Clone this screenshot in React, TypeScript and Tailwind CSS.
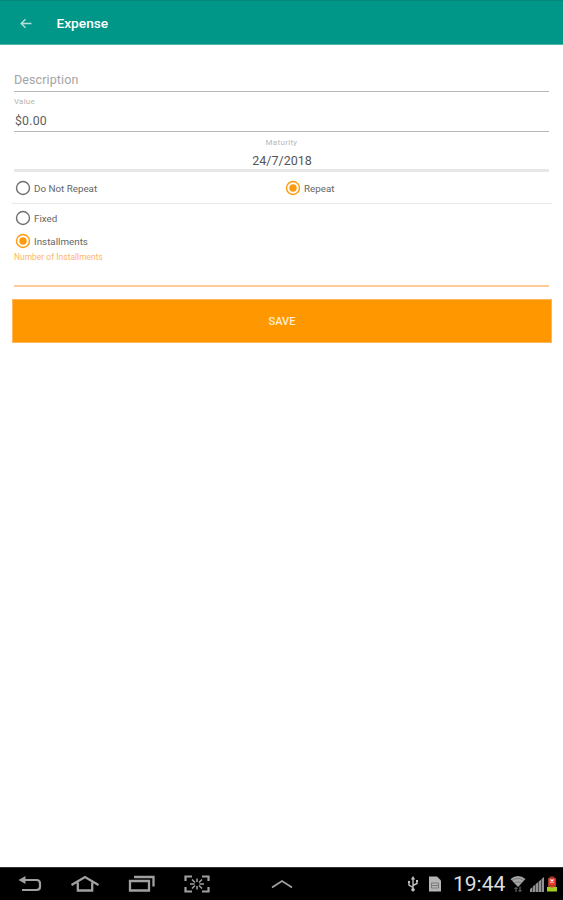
import clsx from "clsx";

type RadioProps = {
  label: string;
  checked?: boolean;
  className?: string;
};

function Radio({ label, checked, className }: RadioProps) {
  return (
    <label className={clsx("flex items-center gap-[3px]", className)}>
      <svg
        viewBox="0 0 16 16"
        className={clsx("size-4 shrink-0", checked ? "text-[#ff9a0c]" : "text-[#707070]")}>
        <circle cx="8" cy="8" r="6.5" fill="none" stroke="currentColor" strokeWidth="1.4" />
        {checked && <circle cx="8" cy="8" r="3.7" fill="currentColor" />}
      </svg>
      <span className="pt-px text-[9.8px] leading-none whitespace-nowrap text-[#666]">{label}</span>
    </label>
  );
}

function AppBar() {
  return (
    <header className="flex h-[45px] shrink-0 items-center border-t border-b border-t-[#07877a] border-b-[#4db5aa] bg-[#009688] pt-0.5 pl-5 text-white">
      <svg viewBox="0 0 12 12" className="size-3" fill="none" stroke="#b5e0dc" strokeWidth="1.4">
        <path d="M11.5 5.5H1.2M5.5 1.2 1.2 5.5 5.5 9.8" />
      </svg>
      <h1 className="ml-[24.5px] text-[13.7px] leading-none font-medium">Expense</h1>
    </header>
  );
}

function NavBar() {
  return (
    <footer className="flex h-[33px] shrink-0 items-center border-t border-[#333] bg-black">
      <div className="flex flex-1 items-center pl-[18px] text-[#a0a0a0]">
        {/* back */}
        <svg viewBox="0 0 24 18" className="h-[18px] w-6" fill="none" stroke="currentColor" strokeWidth="2.2">
          <path d="M4 5H18.5Q22 5 22 8.5V11.5Q22 15 18.5 15H4" />
          <path d="M0.5 5 7.5 1V9Z" fill="currentColor" stroke="none" />
        </svg>
        {/* home */}
        <svg viewBox="0 0 30 18" className="ml-7 h-[18px] w-[30px]" fill="none" stroke="currentColor" strokeWidth="2.3">
          <path d="M1.5 10 15 2 28.5 10M7.8 7.5V15.5H22.2V7.5" />
        </svg>
        {/* recent apps */}
        <svg viewBox="0 0 27 18" className="ml-7 h-[18px] w-[27px]" fill="none" stroke="currentColor" strokeWidth="2.3">
          <path d="M2 6H21V15.5H2Z" />
          <path d="M6 2H25.5V11.5" />
        </svg>
        {/* screen capture */}
        <svg viewBox="0 0 26 18" className="ml-[29px] h-[18px] w-[26px]" fill="none" stroke="currentColor" strokeWidth="2.2">
          <path d="M1.5 6V1.5H8M18 1.5H24.5V6M24.5 12V16.5H18M8 16.5H1.5V12" />
          <path
            strokeWidth="1.5"
            d="M13 3.5V7M13 11V14.5M6 9H10.5M15.5 9H20M8 4.5 11 7.5M18 4.5 15 7.5M8 13.5 11 10.5M18 13.5 15 10.5"
          />
        </svg>
        {/* expand */}
        <svg viewBox="0 0 22 10" className="ml-[61px] h-2.5 w-[22px]" fill="none" stroke="currentColor" strokeWidth="1.8">
          <path d="M1 8.5 11 2 21 8.5" />
        </svg>
      </div>

      <div className="flex items-center pr-1.5">
        {/* usb */}
        <svg viewBox="0 0 12 16" className="h-4 w-3" fill="none" stroke="#c0c0c0" strokeWidth="1.4">
          <path d="M6 2V13M6 11.5 2 9V6M6 9.5 10 7.5V5" />
          <path d="M6 0 8.2 3.5H3.8Z" fill="#c0c0c0" stroke="none" />
          <circle cx="6" cy="13.7" r="1.8" fill="#c0c0c0" stroke="none" />
          <circle cx="2" cy="6" r="1.2" fill="#c0c0c0" stroke="none" />
          <path d="M9 4H11V6H9Z" fill="#c0c0c0" stroke="none" />
        </svg>
        {/* sim card */}
        <svg viewBox="0 0 12 16" className="ml-2.5 h-4 w-3">
          <path d="M0 0.5H8L12 4.5V15.5H0Z" fill="#b5b5b5" />
          <path d="M2.5 7H9.5M2.5 9.5H9.5M2.5 12H9.5M2.5 7V12M9.5 7V12" stroke="#757575" strokeWidth="0.9" />
        </svg>
        <time className="ml-3 w-[54px] pt-px text-[21px] leading-none whitespace-nowrap text-[#dedede]">19:44</time>
        {/* wifi with traffic arrows */}
        <svg viewBox="0 0 16 18" className="ml-[3px] h-[18px] w-4">
          <path d="M0.5 4Q8 -2 15.5 4L8 12Z" fill="#a5a5a5" />
          <path d="M2 5.5Q8 1.5 14 5.5M4.5 8Q8 5.5 11.5 8" fill="none" stroke="#707070" strokeWidth="0.8" />
          <path d="M6 17V12.5M4.5 14 6 12.5 7.5 14M10 11.5V16.5M8.5 15 10 16.5 11.5 15" fill="none" stroke="#777" strokeWidth="1" />
        </svg>
        {/* signal strength */}
        <svg viewBox="0 0 14 15" className="ml-1 h-[15px] w-3.5" fill="#929292">
          <path d="M0 12 2.4 10.3V15H0ZM2.9 9.5 5.3 7.5V15H2.9ZM5.8 7 8.2 5V15H5.8ZM8.7 4.5 11.1 2.5V15H8.7ZM11.6 2 14 0V15H11.6Z" />
        </svg>
        {/* battery */}
        <svg viewBox="0 0 10 16" className="ml-[3px] h-4 w-2.5">
          <path d="M2.5 0.5H7.5V2H9V11H1V2H2.5Z" fill="#9c3a2c" />
          <path d="M0 11H10V15.5H0Z" fill="#a5cf22" />
          <path d="M2 2.5H8V9H2Z" fill="#ef3b2d" />
          <path d="M3.5 3.5 6.5 6.5M6.5 3.5 3.5 6.5" stroke="#fff" strokeWidth="1.2" />
          <path d="M3 10H7L5 12.5Z" fill="#e74b25" />
        </svg>
      </div>
    </footer>
  );
}

export default function App() {
  return (
    <div className="flex h-screen flex-col bg-white font-['Roboto','Liberation_Sans',sans-serif]">
      <AppBar />

      <main className="flex-1 pr-[11px] pl-3">
        <div className="pr-[3px] pl-0.5">
          <div className="flex h-[47px] items-end border-b border-[#b8b8b8] pb-[5px]">
            <span className="text-[12.5px] leading-none tracking-[0.1px] text-[#a4a4a4]">Description</span>
          </div>

          <div className="h-10 border-b border-[#b8b8b8] pt-1.5">
            <div className="text-[8px] leading-none tracking-[0.2px] text-[#b4b4b4]">Value</div>
            <div className="mt-[9px] pl-px text-[12.3px] leading-none tracking-[0.2px] text-[#606060]">$0.00</div>
          </div>

          <div className="h-10 border-b-[3px] border-[#e7e7e7] pt-[7px] text-center">
            <div className="text-[8px] leading-none tracking-[0.3px] text-[#b8b8b8]">Maturity</div>
            <div className="mt-2 pl-px text-[12.5px] leading-none text-[#555]">24/7/2018</div>
          </div>
        </div>

        <div className="flex h-8 items-center border-b border-[#e8e8e8] pt-px pl-[3px]">
          <Radio label="Do Not Repeat" className="w-[270px]" />
          <Radio label="Repeat" checked />
        </div>

        <div className="pt-1.5 pr-[3px] pl-0.5">
          <Radio label="Fixed" className="pl-px" />
          <Radio label="Installments" checked className="mt-[7px] pl-px" />
          <div className="h-[38px] border-b-2 border-[#ffcb98] pt-1">
            <div className="text-[8.4px] leading-none tracking-[0.05px] text-[#ffb568]">Number of Installments</div>
          </div>
        </div>

        <button className="mt-3 flex h-11 w-full items-center justify-center border border-[#ffb65c] bg-[#ff9800] text-[11px] leading-none font-medium text-[#ffedd0]">
          SAVE
        </button>
      </main>

      <NavBar />
    </div>
  );
}
